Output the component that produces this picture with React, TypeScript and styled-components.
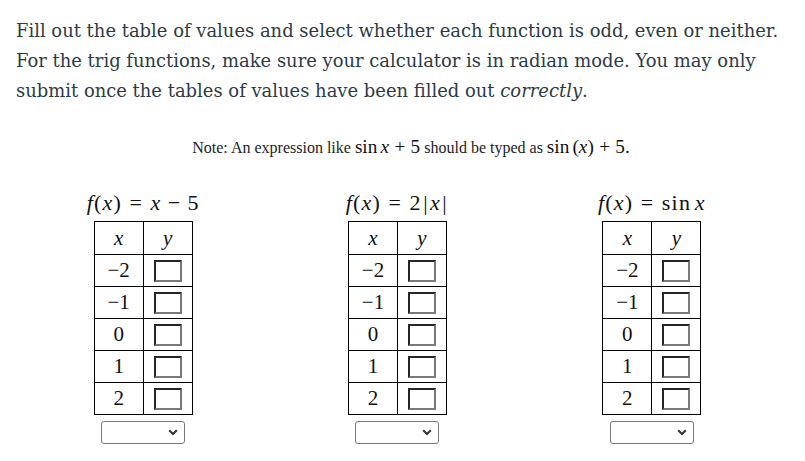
import React from "react";
import styled, { createGlobalStyle } from "styled-components";

const GlobalStyle = createGlobalStyle`
  html, body {
    margin: 0;
    padding: 0;
    background: #ffffff;
  }
  body {
    font-family: "DejaVu Serif", "Liberation Serif", serif;
    color: #2d3b45;
  }
`;

const Page = styled.div`
  width: 763px;
  padding: 16px 0 0 16px;
`;

const Intro = styled.p`
  margin: 0;
  font-family: "DejaVu Serif", serif;
  font-size: 17.95px;
  line-height: 30px;
  color: #2d3b45;
  white-space: nowrap;
`;

const Note = styled.p`
  margin: 31px 0 0 0;
  padding-left: 27px;
  text-align: center;
  font-family: "Liberation Serif", serif;
  font-size: 16px;
  line-height: 20px;
  color: #222;
`;

const Columns = styled.div`
  display: grid;
  grid-template-columns: repeat(3, 1fr);
  margin-top: 33px;
`;

const Column = styled.div`
  display: flex;
  flex-direction: column;
  align-items: center;
`;

const Math = styled.span<{ $size?: number }>`
  font-family: "Liberation Serif", serif;
  font-size: ${(p) => (p.$size ? `${p.$size}px` : "1.2em")};
  color: #111;
  white-space: nowrap;
`;

const LabelMath = styled(Math)`
  letter-spacing: 1.2px;
`;

const Mi = styled.i`
  font-style: italic;
`;

const Rel = styled.span`
  margin: 0 0.34em;
`;

const Bin = styled.span`
  margin: 0 0.28em;
`;

const Op = styled.span`
  margin-right: 0.1667em;
`;

const Bar = styled.span`
  display: inline-block;
  padding: 0 0.06em;
`;

const FuncLabel = styled.div`
  line-height: 24px;
  height: 24px;
`;

const ValueTable = styled.table`
  border-collapse: collapse;
  margin-top: 6px;
`;

const HeadCell = styled.th`
  width: 48px;
  height: 32px;
  padding: 0;
  border: 1px solid #000;
  font-weight: normal;
  text-align: center;
  vertical-align: middle;
  font-family: "Liberation Serif", serif;
  font-size: 21px;
  color: #111;
`;

const Cell = styled.td`
  width: 48px;
  height: 31px;
  padding: 0;
  border: 1px solid #000;
  text-align: center;
  vertical-align: middle;
  font-family: "Liberation Serif", serif;
  font-size: 21px;
  color: #111;
`;

const BoxInput = styled.input`
  box-sizing: border-box;
  display: block;
  margin: 0 auto;
  width: 28px;
  height: 22px;
  padding: 0;
  border-style: solid;
  border-width: 2px;
  border-color: #262626 #7a7a7a #7a7a7a #262626;
  background: #fff;
  outline: none;
`;

const SelectWrap = styled.div`
  position: relative;
  margin-top: 6px;
  width: 84px;
  height: 23px;
`;

const Select = styled.select`
  box-sizing: border-box;
  appearance: none;
  -webkit-appearance: none;
  width: 84px;
  height: 23px;
  border: 1px solid #767676;
  border-radius: 3px;
  background: #fff;
  font-family: "Liberation Sans", sans-serif;
  font-size: 13px;
  outline: none;
`;

const Chevron = styled.svg`
  position: absolute;
  right: 7px;
  top: 8px;
  pointer-events: none;
`;

const rows = ["−2", "−1", "0", "1", "2"];

type Fn = { key: string; label: React.ReactNode };

const fns: Fn[] = [
  {
    key: "lin",
    label: (
      <LabelMath $size={22}>
        <Mi>f</Mi>(<Mi>x</Mi>)<Rel>=</Rel>
        <Mi>x</Mi>
        <Bin>−</Bin>5
      </LabelMath>
    ),
  },
  {
    key: "abs",
    label: (
      <LabelMath $size={22}>
        <Mi>f</Mi>(<Mi>x</Mi>)<Rel>=</Rel>2<Bar>|</Bar>
        <Mi>x</Mi>
        <Bar>|</Bar>
      </LabelMath>
    ),
  },
  {
    key: "sin",
    label: (
      <LabelMath $size={22}>
        <Mi>f</Mi>(<Mi>x</Mi>)<Rel>=</Rel>
        <Op>sin</Op>
        <Mi>x</Mi>
      </LabelMath>
    ),
  },
];

function ValueColumn({ fn }: { fn: Fn }) {
  return (
    <Column>
      <FuncLabel>{fn.label}</FuncLabel>
      <ValueTable>
        <thead>
          <tr>
            <HeadCell>
              <Mi>x</Mi>
            </HeadCell>
            <HeadCell>
              <Mi>y</Mi>
            </HeadCell>
          </tr>
        </thead>
        <tbody>
          {rows.map((r) => (
            <tr key={r}>
              <Cell>{r}</Cell>
              <Cell>
                <BoxInput type="text" aria-label={`y at ${r}`} />
              </Cell>
            </tr>
          ))}
        </tbody>
      </ValueTable>
      <SelectWrap>
        <Select defaultValue="">
          <option value=""></option>
          <option value="odd">odd</option>
          <option value="even">even</option>
          <option value="neither">neither</option>
        </Select>
        <Chevron width="10" height="7" viewBox="0 0 10 7">
          <path d="M1.2 1.3 L5 5 L8.8 1.3" fill="none" stroke="#333" strokeWidth="2" />
        </Chevron>
      </SelectWrap>
    </Column>
  );
}

export default function App() {
  return (
    <>
      <GlobalStyle />
      <Page>
        <Intro>
          Fill out the table of values and select whether each function is odd, even or neither.
          <br />
          For the trig functions, make sure your calculator is in radian mode. You may only
          <br />
          submit once the tables of values have been filled out <i>correctly</i>.
        </Intro>
        <Note>
          Note: An expression like{" "}
          <Math>
            <Op>sin</Op>
            <Mi>x</Mi>
            <Bin>+</Bin>5
          </Math>{" "}
          should be typed as{" "}
          <Math>
            <Op>sin</Op>(<Mi>x</Mi>)<Bin>+</Bin>5.
          </Math>
        </Note>
        <Columns>
          {fns.map((fn) => (
            <ValueColumn key={fn.key} fn={fn} />
          ))}
        </Columns>
      </Page>
    </>
  );
}
